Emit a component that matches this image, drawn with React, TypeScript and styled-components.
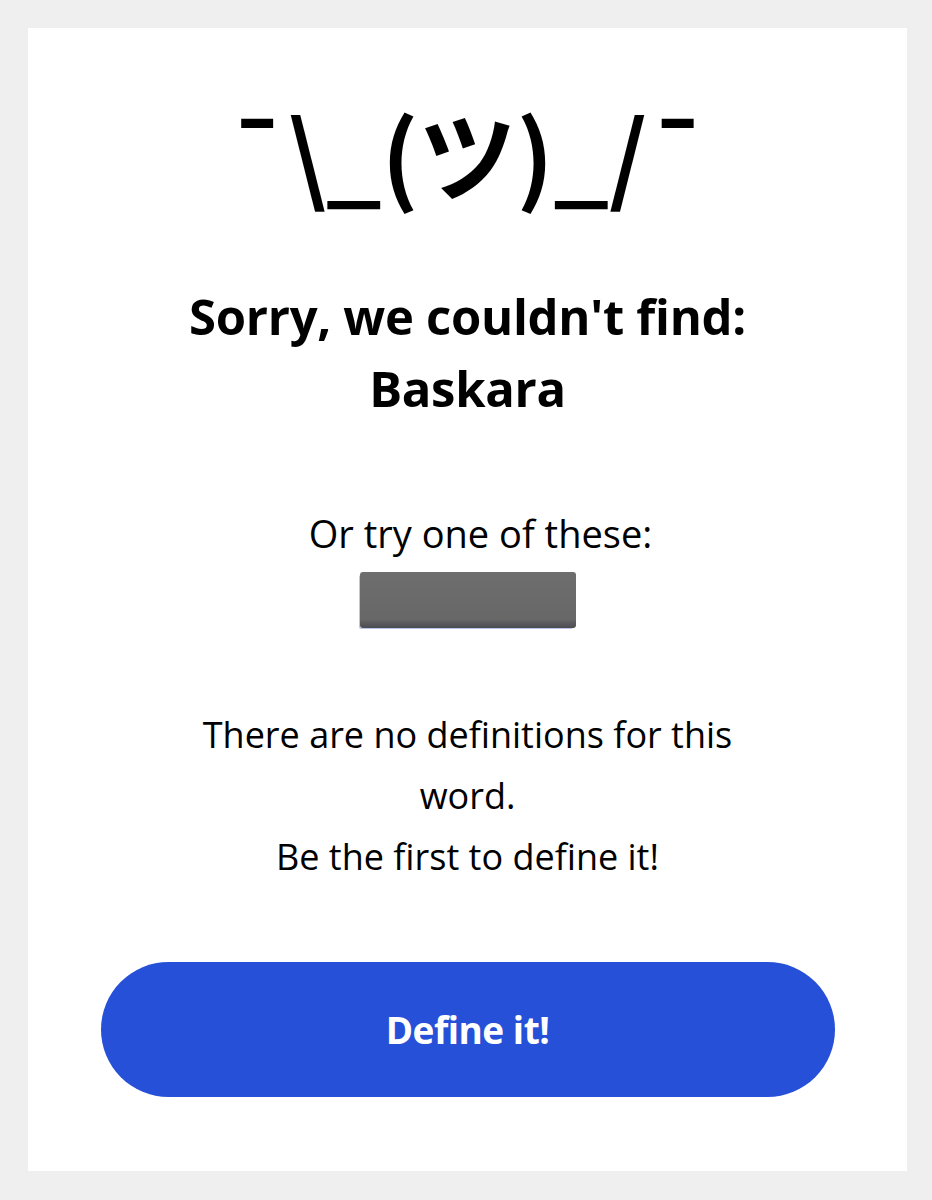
import React from 'react';
import styled, { createGlobalStyle } from 'styled-components';

const GlobalStyle = createGlobalStyle`
  html, body {
    margin: 0;
    padding: 0;
    background: #efefef;
  }
  body {
    font-family: "Open Sans", "Noto Sans", sans-serif;
    color: #000;
  }
`;

const Page = styled.div`
  padding: 28px 25px 29px 28px;
  min-height: 1200px;
  box-sizing: border-box;
`;

const Card = styled.div`
  background: #fff;
  height: 1143px;
  box-sizing: border-box;
  display: flex;
  flex-direction: column;
  align-items: center;
  padding: 48px 72px 0;
`;

const Shrug = styled.div`
  font-family: "Noto Sans CJK JP", "Noto Sans", sans-serif;
  font-size: 98px;
  font-weight: 700;
  line-height: 150px;
  white-space: nowrap;
`;

const Title = styled.h1`
  margin: 54px 0 0;
  font-size: 49px;
  line-height: 72px;
  font-weight: 700;
  text-align: center;
  letter-spacing: -0.3px;
`;

const Suggest = styled.p`
  margin: 86px 0 0;
  padding-left: 26px;
  font-size: 38px;
  line-height: 46px;
  text-align: center;
`;

const Hidden = styled.div`
  margin-top: 16px;
  width: 216px;
  height: 56px;
  border-radius: 3px;
  background: linear-gradient(#6e6e6e, #676767 85%, #4a4a52);
  box-shadow: -2px 2px 0 -1px rgba(60, 90, 200, 0.35);
`;

const Empty = styled.p`
  margin: 76px 0 0;
  max-width: 600px;
  font-size: 36px;
  line-height: 61px;
  text-align: center;
`;

const DefineButton = styled.button`
  margin-top: 75px;
  width: 734px;
  height: 135px;
  border: none;
  border-radius: 68px;
  background: #2650d8;
  color: #fff;
  font-family: "Open Sans", "Noto Sans", sans-serif;
  font-size: 37px;
  font-weight: 700;
  letter-spacing: -0.5px;
  cursor: pointer;
`;

export default function App() {
  return (
    <>
      <GlobalStyle />
      <Page>
        <Card>
          <Shrug>¯\_(ツ)_/¯</Shrug>
          <Title>
            Sorry, we couldn't find:
            <br />
            Baskara
          </Title>
          <Suggest>Or try one of these:</Suggest>
          <Hidden />
          <Empty>
            There are no definitions for this
            <br />
            word.
            <br />
            Be the first to define it!
          </Empty>
          <DefineButton>Define it!</DefineButton>
        </Card>
      </Page>
    </>
  );
}
